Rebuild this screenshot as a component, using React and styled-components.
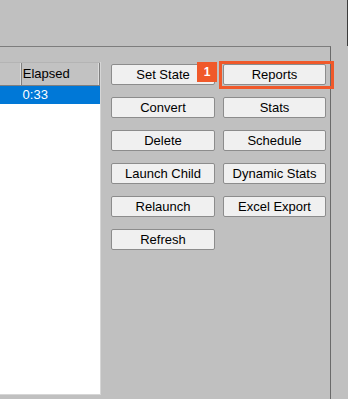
import React from "react";
import styled, { createGlobalStyle } from "styled-components";

const Global = createGlobalStyle`
  html, body { margin: 0; padding: 0; background: #c0c0c0; }
  body { font-family: "Liberation Sans", Arial, sans-serif; font-size: 13px; color: #000; }
`;

const Page = styled.div`
  position: relative;
  width: 348px;
  height: 399px;
  overflow: hidden;
  background: #c0c0c0;
  display: flex;
  flex-direction: column;
`;

const TopBar = styled.div`
  height: 46px;
  box-sizing: border-box;
  border-right: 1px solid #3c3c3c;
  flex: none;
`;

const Body = styled.div`
  flex: 1;
  display: flex;
`;

const Panel = styled.div`
  width: 331px;
  box-sizing: border-box;
  border-top: 1px solid #7d7d7d;
  border-right: 1px solid #6a6a6a;
  display: flex;
  align-items: flex-start;
  gap: 10px;
`;

const Table = styled.div`
  margin-top: 15px;
  width: 101px;
  height: 333px;
  box-sizing: border-box;
  background: #fff;
  border-right: 1px solid #d6d6d6;
  border-bottom: 1px solid #d6d6d6;
  display: flex;
  flex-direction: column;
`;

const HeaderRow = styled.div`
  display: flex;
  height: 24px;
  background: #c2c2c2;
  border-top: 1px solid #b4b4b4;
  border-bottom: 1px solid #7f7f7f;
  box-sizing: border-box;
`;

const HeaderCell = styled.div`
  width: ${(p) => p.$w}px;
  box-sizing: border-box;
  border-right: 1px solid #7f7f7f;
  box-shadow: inset -1px 0 0 #dcdcdc;
  padding-left: 1px;
  line-height: 22px;
  white-space: nowrap;
  overflow: hidden;
`;

const DataRow = styled.div`
  display: flex;
  height: 18px;
  background: ${(p) => (p.$selected ? "#0078d7" : "transparent")};
  color: ${(p) => (p.$selected ? "#fff" : "#000")};
`;

const DataCell = styled.div`
  width: ${(p) => p.$w}px;
  padding-left: 1px;
  line-height: 18px;
  white-space: nowrap;
`;

const Buttons = styled.div`
  margin-top: 17px;
  display: grid;
  grid-template-columns: 104px 103px;
  grid-auto-rows: 21px;
  column-gap: 8px;
  row-gap: 12px;
`;

const Button = styled.button`
  box-sizing: border-box;
  margin: 0;
  padding: 0;
  height: 21px;
  background: #f0f0f0;
  border: 1px solid #8c8c8c;
  border-radius: 2px;
  font-family: "Liberation Sans", Arial, sans-serif;
  font-size: 13px;
  color: #000;
  text-align: center;
  line-height: 19px;
  white-space: nowrap;
`;

const Strip = styled.div`
  flex: 1;
`;

const Highlight = styled.div`
  position: absolute;
  left: 219px;
  top: 61px;
  width: 115px;
  height: 28px;
  box-sizing: border-box;
  border: 3px solid #f0592a;
`;

const Badge = styled.div`
  position: absolute;
  left: 197px;
  top: 62px;
  width: 20px;
  height: 20px;
  background: #f0592a;
  color: #fff;
  font-family: "Liberation Sans", Arial, sans-serif;
  font-weight: bold;
  font-size: 12px;
  line-height: 20px;
  text-align: center;
`;

const buttons = [
  "Set State",
  "Reports",
  "Convert",
  "Stats",
  "Delete",
  "Schedule",
  "Launch Child",
  "Dynamic Stats",
  "Relaunch",
  "Excel Export",
  "Refresh",
];

export default function App() {
  return (
    <>
      <Global />
      <Page>
        <TopBar />
        <Body>
          <Panel>
            <Table>
              <HeaderRow>
                <HeaderCell $w={22}></HeaderCell>
                <HeaderCell $w={79}>Elapsed</HeaderCell>
              </HeaderRow>
              <DataRow $selected>
                <DataCell $w={21}></DataCell>
                <DataCell $w={79}>0:33</DataCell>
              </DataRow>
            </Table>
            <Buttons>
              {buttons.map((b) => (
                <Button key={b}>{b}</Button>
              ))}
            </Buttons>
          </Panel>
          <Strip />
        </Body>
        <Highlight />
        <Badge>1</Badge>
      </Page>
    </>
  );
}
